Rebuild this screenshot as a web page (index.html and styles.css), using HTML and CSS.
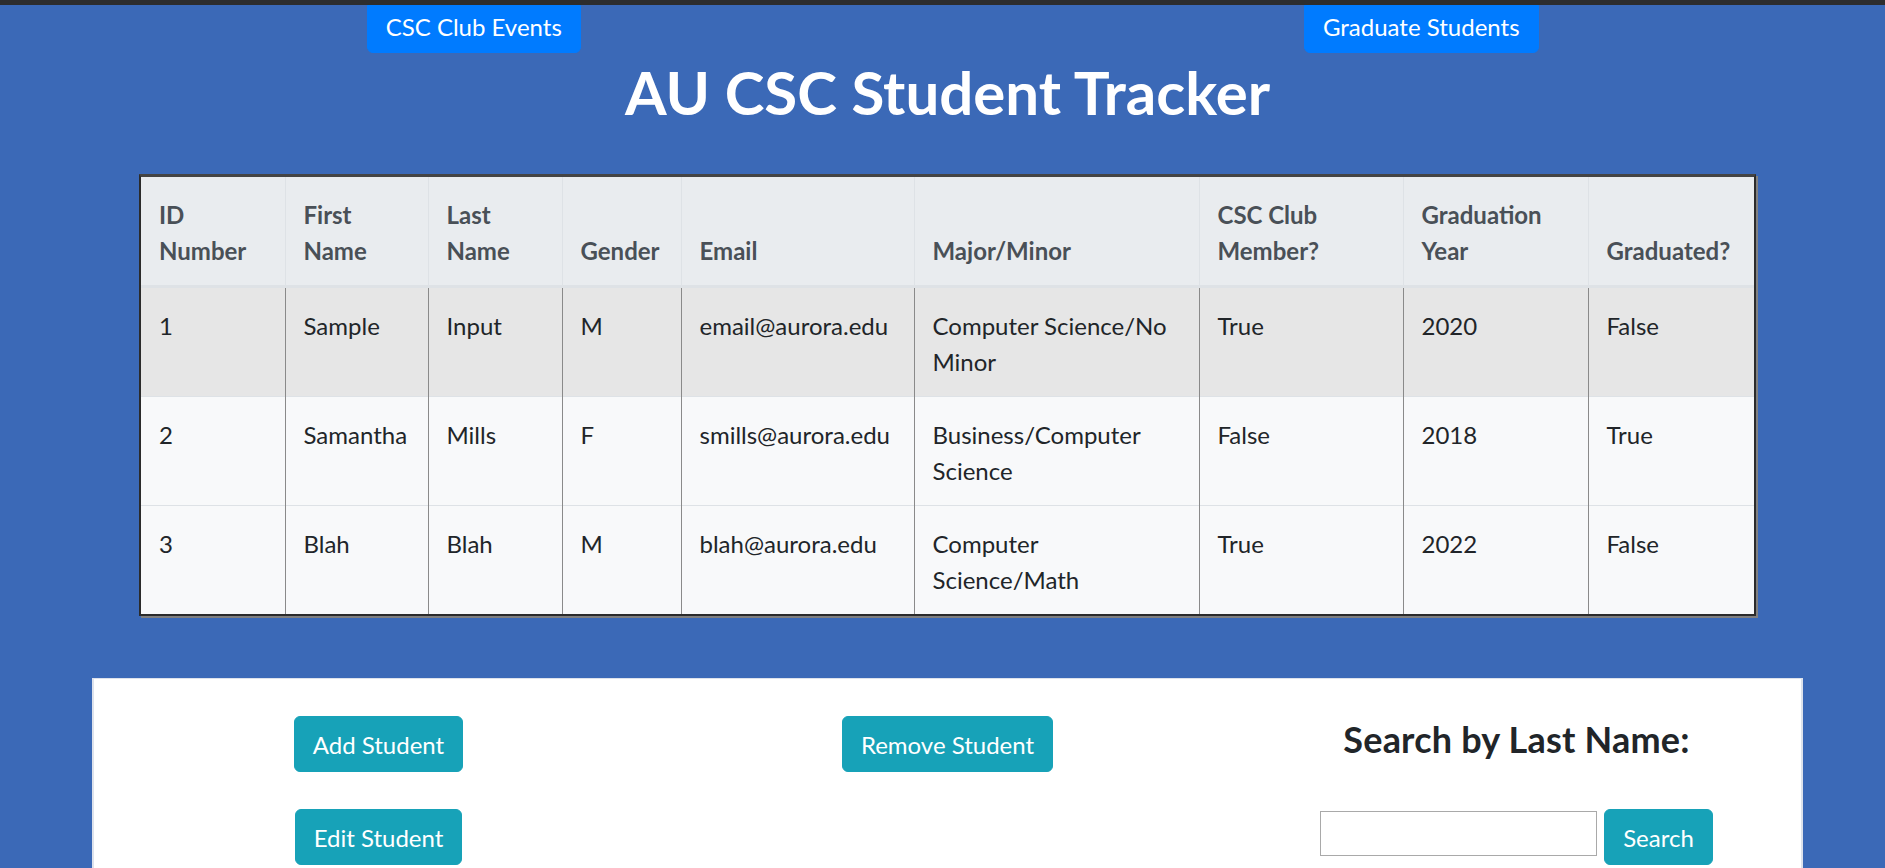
FILE: index.html
```html
<!DOCTYPE html>
<html lang="en">
<head>
<meta charset="utf-8">
<title>AU CSC Student Tracker</title>
<link rel="stylesheet" href="styles.css">
</head>
<body>
<div class="topbar"></div>
<div class="page">
  <nav class="nav">
    <div class="nav-cell"><a class="btn btn-primary nav-btn" href="#">CSC Club Events</a></div>
    <div class="nav-cell"><a class="btn btn-primary nav-btn" href="#">Graduate Students</a></div>
  </nav>

  <h1 class="title">AU CSC Student Tracker</h1>

  <div class="table-frame">
    <table class="students">
      <colgroup>
        <col class="c-id"><col class="c-first"><col class="c-last"><col class="c-gender"><col class="c-email"><col class="c-major"><col class="c-club"><col class="c-year"><col class="c-grad">
      </colgroup>
      <thead>
        <tr>
          <th>ID Number</th>
          <th>First Name</th>
          <th>Last Name</th>
          <th>Gender</th>
          <th>Email</th>
          <th>Major/Minor</th>
          <th>CSC Club Member?</th>
          <th>Graduation Year</th>
          <th>Graduated?</th>
        </tr>
      </thead>
      <tbody>
        <tr class="row-active">
          <td>1</td><td>Sample</td><td>Input</td><td>M</td><td>email@aurora.edu</td><td>Computer Science/No Minor</td><td>True</td><td>2020</td><td>False</td>
        </tr>
        <tr>
          <td>2</td><td>Samantha</td><td>Mills</td><td>F</td><td>smills@aurora.edu</td><td>Business/Computer Science</td><td>False</td><td>2018</td><td>True</td>
        </tr>
        <tr>
          <td>3</td><td>Blah</td><td>Blah</td><td>M</td><td>blah@aurora.edu</td><td>Computer Science/Math</td><td>True</td><td>2022</td><td>False</td>
        </tr>
      </tbody>
    </table>
  </div>

  <section class="panel">
    <div class="panel-col col-stack">
      <button class="btn btn-info">Add Student</button>
      <button class="btn btn-info">Edit Student</button>
    </div>
    <div class="panel-col">
      <button class="btn btn-info">Remove Student</button>
    </div>
    <div class="panel-col">
      <h4 class="search-title">Search by Last Name:</h4>
      <div class="search-row">
        <input class="search-input" type="text">
        <button class="btn btn-info">Search</button>
      </div>
    </div>
  </section>
</div>
</body>
</html>
```
FILE: styles.css
```css
html {
  overflow: hidden;
}
body {
  margin: 0;
  background: #3b69b7;
  font-family: "Lato", "Noto Sans", sans-serif;
  font-size: 24px;
  line-height: 1.5;
  color: #212529;
}
.topbar {
  height: 5px;
  background: #2d2d2d;
}
.page {
  width: 1895px;
}

/* top navigation */
.nav {
  display: grid;
  grid-template-columns: 1fr 1fr;
}
.nav-cell {
  display: flex;
  justify-content: center;
}
.btn {
  display: inline-block;
  font-family: inherit;
  font-size: 24px;
  line-height: 36px;
  padding: 10px 18px 8px;
  border: 1px solid transparent;
  border-radius: 6px;
  color: #fff;
  text-decoration: none;
  cursor: pointer;
  white-space: nowrap;
}
.btn-primary {
  background: #007bff;
  border-color: #007bff;
}
.btn-info {
  background: #17a2b8;
  border-color: #17a2b8;
}
.nav-btn {
  padding: 3px 18px 7px;
  line-height: 36px;
  border-radius: 0 0 6px 6px;
  height: 48px;
  box-sizing: border-box;
}

/* title */
.title {
  margin: 3px 0 46px;
  text-align: center;
  color: #fff;
  font-size: 60px;
  font-weight: 700;
  line-height: 72px;
}

/* table */
.table-frame {
  width: 1613px;
  margin: 0 auto;
  border: 2px solid #2b2b2b;
  border-top: 3px solid #444;
  box-shadow: 2px 2px 0 #808080;
}
.students {
  width: 1613px;
  table-layout: fixed;
  border-collapse: collapse;
}
.c-id { width: 144px; }
.c-first { width: 143px; }
.c-last { width: 134px; }
.c-gender { width: 119px; }
.c-email { width: 233px; }
.c-major { width: 285px; }
.c-club { width: 204px; }
.c-year { width: 185px; }
.c-grad { width: 166px; }

.students th,
.students td {
  padding: 20px 18px 16px;
  text-align: left;
  line-height: 36px;
}
.students th {
  background: #e9ecef;
  color: #495057;
  font-weight: 700;
  vertical-align: bottom;
  border-left: 1px solid #dee2e6;
  border-bottom: 3px solid #dee2e6;
}
.students th:first-child {
  border-left: 0;
}
.students td {
  background: #f8f9fa;
  vertical-align: top;
  border-left: 1px solid #8a8a8a;
  border-top: 1px solid #dee2e6;
}
.students td:first-child {
  border-left: 0;
}
.students .row-active td {
  background: #e6e6e6;
}

/* bottom panel */
.panel {
  width: 1707px;
  margin: 62px auto 0;
  background: #fff;
  border: 2px solid #dde2ec;
  border-top-width: 1px;
  padding-top: 37px;
  display: grid;
  grid-template-columns: 1fr 1fr 1fr;
  min-height: 300px;
  align-items: start;
}
.panel-col {
  display: flex;
  flex-direction: column;
  align-items: center;
}
.col-stack {
  gap: 37px;
}
.search-title {
  margin: 0 0 47px;
  font-size: 36px;
  font-weight: 700;
  line-height: 46px;
  color: #212529;
  letter-spacing: 0.2px;
}
.search-row {
  display: flex;
  align-items: flex-start;
  gap: 7px;
}
.search-input {
  width: 277px;
  height: 45px;
  box-sizing: border-box;
  margin-top: 2px;
  border: 1px solid #a9a9a9;
  font-family: inherit;
  font-size: 20px;
  padding: 1px 3px;
}
```
